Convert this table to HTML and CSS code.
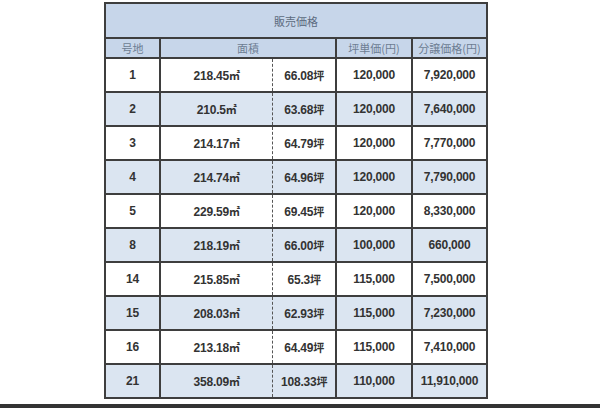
FILE: index.html
```html
<!DOCTYPE html>
<html lang="ja">
<head>
<meta charset="utf-8">
<link rel="stylesheet" href="styles.css">
</head>
<body>
<div class="page">
  <table class="price">
    <colgroup>
      <col class="c1"><col class="c2"><col class="c3"><col class="c4"><col class="c5">
    </colgroup>
    <thead>
      <tr class="title"><th colspan="5">販売価格</th></tr>
      <tr class="head">
        <th>号地</th>
        <th colspan="2">面積</th>
        <th>坪単価(円)</th>
        <th>分譲価格(円)</th>
      </tr>
    </thead>
    <tbody>
      <tr><td>1</td><td class="m2">218.45<span class="u">㎡</span></td><td class="tsubo">66.08<span class="u">坪</span></td><td>120,000</td><td>7,920,000</td></tr>
      <tr class="alt"><td>2</td><td class="m2">210.5<span class="u">㎡</span></td><td class="tsubo">63.68<span class="u">坪</span></td><td>120,000</td><td>7,640,000</td></tr>
      <tr><td>3</td><td class="m2">214.17<span class="u">㎡</span></td><td class="tsubo">64.79<span class="u">坪</span></td><td>120,000</td><td>7,770,000</td></tr>
      <tr class="alt"><td>4</td><td class="m2">214.74<span class="u">㎡</span></td><td class="tsubo">64.96<span class="u">坪</span></td><td>120,000</td><td>7,790,000</td></tr>
      <tr><td>5</td><td class="m2">229.59<span class="u">㎡</span></td><td class="tsubo">69.45<span class="u">坪</span></td><td>120,000</td><td>8,330,000</td></tr>
      <tr class="alt"><td>8</td><td class="m2">218.19<span class="u">㎡</span></td><td class="tsubo">66.00<span class="u">坪</span></td><td>100,000</td><td>660,000</td></tr>
      <tr><td>14</td><td class="m2">215.85<span class="u">㎡</span></td><td class="tsubo">65.3<span class="u">坪</span></td><td>115,000</td><td>7,500,000</td></tr>
      <tr class="alt"><td>15</td><td class="m2">208.03<span class="u">㎡</span></td><td class="tsubo">62.93<span class="u">坪</span></td><td>115,000</td><td>7,230,000</td></tr>
      <tr><td>16</td><td class="m2">213.18<span class="u">㎡</span></td><td class="tsubo">64.49<span class="u">坪</span></td><td>115,000</td><td>7,410,000</td></tr>
      <tr class="alt"><td>21</td><td class="m2">358.09<span class="u">㎡</span></td><td class="tsubo">108.33<span class="u">坪</span></td><td>110,000</td><td>11,910,000</td></tr>
    </tbody>
  </table>
  <div class="bar"></div>
</div>
</body>
</html>
```
FILE: styles.css
```css
* { box-sizing: border-box; }
html, body { margin: 0; padding: 0; background: #ffffff; }
.page {
  width: 600px;
  height: 408px;
  display: flex;
  flex-direction: column;
  padding-top: 2px;
  overflow: hidden;
}
.price {
  margin-left: 104px;
  width: 382px;
  table-layout: fixed;
  border-collapse: collapse;
  border: 2px solid #2a2a2a;
  font-family: "Liberation Sans", "Noto Sans CJK JP", sans-serif;
  color: #333333;
}
.c1 { width: 55px; }
.c2 { width: 112px; }
.c3 { width: 64px; }
.c4 { width: 76px; }
.c5 { width: 75px; }
.price th, .price td {
  padding: 0;
  text-align: center;
  vertical-align: middle;
  border: 2px solid #3e3e3e;
}
.price th {
  font-family: "Noto Sans CJK JP", sans-serif;
  font-weight: normal;
  font-size: 11px;
  color: #6d7d92;
  background: #c7d6ea;
}
.title th { height: 35px; color: #5d6c80; }
.head th { height: 20px; line-height: 14px; }
.price td {
  height: 34px;
  font-size: 12px;
  font-weight: bold;
  letter-spacing: -0.2px;
}
.alt td { background: #dbe5f1; }
.price td.m2 { border-right: 1px dashed #555555; }
.price td.tsubo { border-left: 1px dashed #555555; }
.u {
  font-family: "Noto Sans CJK JP", sans-serif;
  font-size: 11px;
  font-weight: bold;
  letter-spacing: -1px;
}
.bar {
  margin-top: auto;
  height: 4px;
  background: #333333;
}
```
